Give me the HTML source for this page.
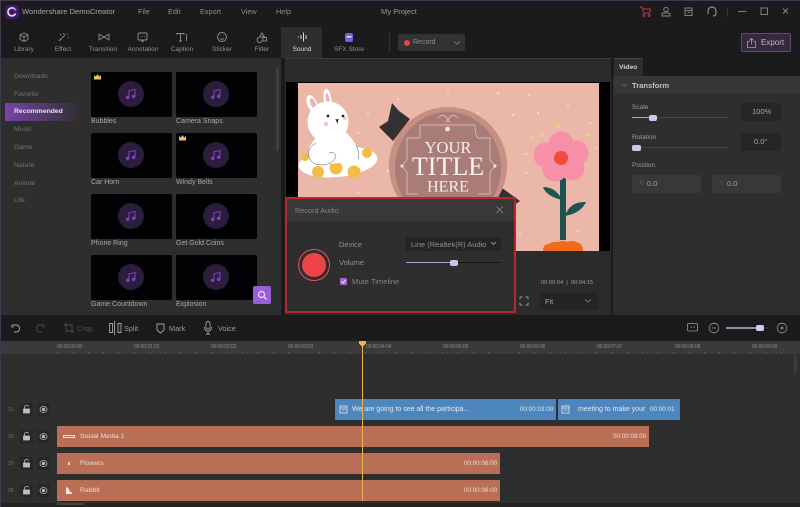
<!DOCTYPE html>
<html><head><meta charset="utf-8">
<style>
html,body{margin:0;padding:0;background:#1b1a1d}
#r{position:relative;width:800px;height:507px;overflow:hidden;background:#1b1a1d;font-family:"Liberation Sans",sans-serif;color:#a9a9a9;font-size:7px;filter:blur(.3px)}
#r div,#r span.a,#r svg{position:absolute}
.t{position:absolute;white-space:nowrap;line-height:10px}
.tab{top:45px;width:50px;text-align:center;font-size:6.5px;color:#8f8f8f}
.ic{stroke:#8f8f8f;fill:none;stroke-width:.9}
.th{width:81px;height:45px;background:#020103;border-radius:2px}
.disc{left:27px;top:9px;width:26px;height:26px;border-radius:50%;background:#2a1e3c}
.lb{font-size:7px;color:#a8a8a8}
.cat{left:14px;font-size:6.8px;color:#747474}
.clip{height:21px;background:#b96f56;left:57px}
.blue{background:#4d86bc}
.rt{top:342px;font-size:5px;color:#8c8c8c;letter-spacing:-.1px}
.num{left:8px;font-size:5px;color:#6f6f6f}
.bx{width:13px;height:13px;background:#272727;border-radius:2px}
.ct{color:#eadcd6;font-size:6.8px}
</style></head><body>
<div id="r">
<div style="left:0;top:0;width:800px;height:1px;background:#3c3a4c"></div>
<div style="left:0;top:0;width:1px;height:507px;background:#3c3a4c"></div>

<!-- title bar -->
<svg style="left:5px;top:5px" width="14" height="14" viewBox="0 0 14 14"><rect width="14" height="14" rx="3" fill="#3b1a66"/><path d="M9.5 3.8A4 4 0 1 0 10.6 8.5" stroke="#e8dcff" stroke-width="1.6" fill="none"/><circle cx="10" cy="4.5" r="1.3" fill="#d05ad8"/></svg>
<span class="t" style="left:22px;top:7px;font-size:7.6px;color:#a5a5a5">Wondershare DemoCreator</span>
<span class="t" style="left:138px;top:7px;font-size:7.3px;color:#8d8d8d">File</span>
<span class="t" style="left:168px;top:7px;font-size:7.3px;color:#8d8d8d">Edit</span>
<span class="t" style="left:200px;top:7px;font-size:7.3px;color:#8d8d8d">Export</span>
<span class="t" style="left:241px;top:7px;font-size:7.3px;color:#8d8d8d">View</span>
<span class="t" style="left:276px;top:7px;font-size:7.3px;color:#8d8d8d">Help</span>
<span class="t" style="left:381px;top:7px;font-size:7.6px;color:#9a9a9a">My Project</span>
<svg style="left:638px;top:5px" width="150" height="14" viewBox="0 0 150 14" fill="none" stroke="#8e8e8e" stroke-width=".9">
<path d="M2 2h2l1.5 6h6l1-4H4.5" stroke="#b8453f"/><circle cx="6" cy="10.5" r=".9" stroke="#b8453f"/><circle cx="11" cy="10.5" r=".9" stroke="#b8453f"/>
<circle cx="28" cy="4.5" r="2.2"/><path d="M24 11v-1.5q0-1.5 1.5-1.5h5q1.500 0 1.500 1.500V11z"/>
<rect x="47" y="3" width="7" height="7.5"/><path d="M47 5.5h7"/><path d="M49.5 7.500h2.500"/>
<path d="M70 9V6a4 4 0 1 1 8 0v2q0 3-3 3" stroke-width="1.2"/>
<path d="M89.500 2v10" stroke="#3e3e3e"/>
<path d="M100 6.500h8.500"/><rect x="123" y="3" width="6.500" height="6.500"/><path d="M145 3.500l5 5m0-5l-5 5"/>
</svg>

<!-- toolbar tabs -->
<div style="left:281px;top:27px;width:41px;height:31px;background:#2e2e30;border-radius:2px 2px 0 0"></div>
<svg style="left:0;top:30px" width="360" height="14" viewBox="0 0 360 14">
<g class="ic"><path d="M20 5l4-2 4 2v4.500l-4 2-4-2zM20 5l4 2 4-2M24 7v4.500"/>
<path d="M59 11l6-6M63.500 3l.8 1.500M67 3.500l.5 1M68 7l1 .5M60 4l1 1"/>
<path d="M99 4v6l5-3zM109 4v6l-5-3z"/>
<rect x="138" y="3" width="9" height="7" rx="1"/><path d="M141 10l1.500 2 1.500-2M140.500 6.500h.5M142.500 6.500h.5M144.500 6.500h.5"/>
<path d="M177 5V3.500h7V5M180.500 3.500V11M179 11h3M186.500 4v7"/>
<circle cx="222" cy="7" r="4.500"/><path d="M220 8.500q2 1.500 4 0"/><path d="M220.200 5.500v.5M223.800 5.500v.5"/>
<path d="M262 3l2.500 4h-5zM259 7.500a2.500 2.500 0 1 0 3 3M263 7.500h3.500v3.500H263z"/></g>
<path d="M301 5v4M303.500 2.500v9M306 5v4" stroke="#d8d8d8" fill="none" stroke-width="1"/><path d="M298.500 6.500v1" stroke="#d8d8d8"/>
<rect x="345" y="3" width="8" height="9" rx="2" fill="#7d5bd6"/><rect x="346.500" y="6" width="5" height="1.500" fill="#e6dcff"/>
</svg>
<span class="t tab" style="left:-1px">Library</span>
<span class="t tab" style="left:38px">Effect</span>
<span class="t tab" style="left:78px">Transition</span>
<span class="t tab" style="left:118px">Annotation</span>
<span class="t tab" style="left:157px">Caption</span>
<span class="t tab" style="left:197px">Sticker</span>
<span class="t tab" style="left:237px">Filter</span>
<span class="t tab" style="left:277px;color:#dcdcdc">Sound</span>
<span class="t tab" style="left:324px">SFX Store</span>
<div style="left:389px;top:32px;width:1px;height:20px;background:#323232"></div>
<div style="left:398px;top:34px;width:67px;height:17px;background:#323232;border-radius:2px"></div>
<div style="left:404px;top:40px;width:6px;height:6px;border-radius:50%;background:#e8433f"></div>
<span class="t" style="left:413px;top:38px;font-size:7px;color:#8d8d8d">Record</span>
<svg style="left:453px;top:40px" width="8" height="6"><path d="M1 1.500l3 2.500 3-2.500" stroke="#777" fill="none"/></svg>
<div style="left:741px;top:33px;width:50px;height:19px;background:#35283f;border:1px solid #5e4a78;border-radius:2px;box-sizing:border-box"></div>
<svg style="left:746px;top:37px" width="12" height="12" fill="none" stroke="#a8a0b0" stroke-width=".8"><path d="M3.500 4.500H1.500v6h8v-6h-2M5.500 7.500V1.500M3.500 3.500l2-2 2 2"/></svg>
<span class="t" style="left:761px;top:38px;font-size:8px;color:#bdb5c4">Export</span>

<!-- left panel -->
<div style="left:1px;top:58px;width:280px;height:257px;background:#2e2e2f"></div>
<div style="left:5px;top:103px;width:76px;height:18px;background:linear-gradient(90deg,#7844a8,#2f2e30)"></div>
<span class="t cat" style="top:72px">Downloads</span>
<span class="t cat" style="top:90px">Favorite</span>
<span class="t cat" style="top:107px;color:#e6dff0;font-weight:bold">Recommended</span>
<span class="t cat" style="top:125px">Music</span>
<span class="t cat" style="top:143px">Game</span>
<span class="t cat" style="top:161px">Nature</span>
<span class="t cat" style="top:179px">Animal</span>
<span class="t cat" style="top:196px">Life</span>
<div style="left:276px;top:67px;width:3px;height:84px;background:#3f3f40;border-radius:2px"></div>

<div class="th" style="left:91px;top:72px"><div class="disc"></div><svg style="left:34px;top:16px" width="12" height="12" viewBox="0 0 12 12" fill="none" stroke="#7f3eb6" stroke-width="1.100"><path d="M4 9V2.800L10 1.500V8"/><circle cx="2.700" cy="9.300" r="1.300" fill="#7f3eb6"/><circle cx="8.700" cy="8.300" r="1.300" fill="#7f3eb6"/></svg></div>
<div class="th" style="left:176px;top:72px"><div class="disc"></div><svg style="left:34px;top:16px" width="12" height="12" viewBox="0 0 12 12" fill="none" stroke="#7f3eb6" stroke-width="1.100"><path d="M4 9V2.800L10 1.500V8"/><circle cx="2.700" cy="9.300" r="1.300" fill="#7f3eb6"/><circle cx="8.700" cy="8.300" r="1.300" fill="#7f3eb6"/></svg></div>
<div class="th" style="left:91px;top:133px"><div class="disc"></div><svg style="left:34px;top:16px" width="12" height="12" viewBox="0 0 12 12" fill="none" stroke="#7f3eb6" stroke-width="1.100"><path d="M4 9V2.800L10 1.500V8"/><circle cx="2.700" cy="9.300" r="1.300" fill="#7f3eb6"/><circle cx="8.700" cy="8.300" r="1.300" fill="#7f3eb6"/></svg></div>
<div class="th" style="left:176px;top:133px"><div class="disc"></div><svg style="left:34px;top:16px" width="12" height="12" viewBox="0 0 12 12" fill="none" stroke="#7f3eb6" stroke-width="1.100"><path d="M4 9V2.800L10 1.500V8"/><circle cx="2.700" cy="9.300" r="1.300" fill="#7f3eb6"/><circle cx="8.700" cy="8.300" r="1.300" fill="#7f3eb6"/></svg></div>
<div class="th" style="left:91px;top:194px"><div class="disc"></div><svg style="left:34px;top:16px" width="12" height="12" viewBox="0 0 12 12" fill="none" stroke="#7f3eb6" stroke-width="1.100"><path d="M4 9V2.800L10 1.500V8"/><circle cx="2.700" cy="9.300" r="1.300" fill="#7f3eb6"/><circle cx="8.700" cy="8.300" r="1.300" fill="#7f3eb6"/></svg></div>
<div class="th" style="left:176px;top:194px"><div class="disc"></div><svg style="left:34px;top:16px" width="12" height="12" viewBox="0 0 12 12" fill="none" stroke="#7f3eb6" stroke-width="1.100"><path d="M4 9V2.800L10 1.500V8"/><circle cx="2.700" cy="9.300" r="1.300" fill="#7f3eb6"/><circle cx="8.700" cy="8.300" r="1.300" fill="#7f3eb6"/></svg></div>
<div class="th" style="left:91px;top:255px"><div class="disc"></div><svg style="left:34px;top:16px" width="12" height="12" viewBox="0 0 12 12" fill="none" stroke="#7f3eb6" stroke-width="1.100"><path d="M4 9V2.800L10 1.500V8"/><circle cx="2.700" cy="9.300" r="1.300" fill="#7f3eb6"/><circle cx="8.700" cy="8.300" r="1.300" fill="#7f3eb6"/></svg></div>
<div class="th" style="left:176px;top:255px"><div class="disc"></div><svg style="left:34px;top:16px" width="12" height="12" viewBox="0 0 12 12" fill="none" stroke="#7f3eb6" stroke-width="1.100"><path d="M4 9V2.800L10 1.500V8"/><circle cx="2.700" cy="9.300" r="1.300" fill="#7f3eb6"/><circle cx="8.700" cy="8.300" r="1.300" fill="#7f3eb6"/></svg></div>
<svg style="left:93px;top:73px" width="9" height="8"><path d="M1 2l1.800 1.500L4.500 1l1.700 2.500L8 2v4.500H1z" fill="#e8bd68"/></svg>
<svg style="left:178px;top:134px" width="9" height="8"><path d="M1 2l1.800 1.500L4.500 1l1.700 2.500L8 2v4.500H1z" fill="#e8bd68"/></svg>
<span class="t lb" style="left:91px;top:117px">Bubbles</span>
<span class="t lb" style="left:176px;top:117px">Camera Snaps</span>
<span class="t lb" style="left:91px;top:178px">Car Horn</span>
<span class="t lb" style="left:176px;top:178px">Windy Bells</span>
<span class="t lb" style="left:91px;top:239px">Phone Ring</span>
<span class="t lb" style="left:176px;top:239px">Get Gold Coins</span>
<span class="t lb" style="left:91px;top:300px">Game Countdown</span>
<span class="t lb" style="left:176px;top:300px">Explosion</span>
<div style="left:253px;top:286px;width:18px;height:18px;background:#9a5fd6;border-radius:2px"></div>
<svg style="left:256px;top:289px" width="12" height="12" fill="none" stroke="#efe6fa" stroke-width="1.200"><circle cx="5.500" cy="5.500" r="3"/><path d="M8 8l2.500 2.500"/></svg>

<!-- preview -->
<div style="left:285px;top:58px;width:326px;height:257px;background:#2b2b2c"></div>
<div style="left:285px;top:58px;width:326px;height:1px;background:#3d3d3e"></div>
<div style="left:286px;top:82px;width:324px;height:169px;background:#010101"></div>
<svg style="left:298px;top:83px" width="301" height="168" viewBox="0 0 301 168">
<rect width="301" height="168" fill="#ebb7a9"/>
<g fill="#f6d9cf"><circle cx="30" cy="8" r="1"/><circle cx="70" cy="30" r="1"/><circle cx="100" cy="16" r="1.200"/><circle cx="150" cy="8" r="1"/><circle cx="200" cy="10" r="1.200"/><circle cx="215" cy="32" r="1.200"/><circle cx="240" cy="30" r="1.300"/><circle cx="270" cy="22" r="1"/><circle cx="231" cy="12" r="1"/><circle cx="292" cy="40" r="1"/><circle cx="20" cy="130" r="1.200"/><circle cx="60" cy="110" r="1"/><circle cx="90" cy="88" r="1.200"/><circle cx="75" cy="150" r="1"/><circle cx="240" cy="125" r="1"/><circle cx="280" cy="148" r="1"/><circle cx="228" cy="90" r="1"/><circle cx="222" cy="150" r="1"/><circle cx="180" cy="30" r="1"/><circle cx="60" cy="50" r="1"/></g>
<!-- float -->
<ellipse cx="40" cy="79" rx="39.500" ry="15" fill="#fff" transform="rotate(-6 40 79)"/>
<circle cx="38" cy="85" r="6.500" fill="#f4bb46"/><circle cx="20" cy="89" r="6" fill="#f4bb46"/><circle cx="56" cy="89" r="6.500" fill="#f4bb46"/><circle cx="7" cy="74" r="4" fill="#f4bb46"/><circle cx="69" cy="70" r="5" fill="#f4bb46"/>
<!-- rabbit -->
<path d="M13 28q-6-7-4-14 2-4 6 0 4 4 7 13zM28 24q-4-9-2-16 2-4 5 0 3 6 3 15z" fill="#fff"/>
<path d="M15 25q-4-5-3-9 1-2 3 0 3 3 4 8zM29 21q-2-6-1-10 1-2 2 0 2 5 2 10z" fill="#f2afb4"/>
<path d="M18 55Q8 65 11 74Q13 82 24 82L58 78Q63 72 58 62Q52 52 46 48Z" fill="#fff"/>
<circle cx="30" cy="39" r="20.500" fill="#fff"/>
<path d="M18 60Q8 66 11 74Q13 82 24 82Q34 82 38 74Q37 68 31 70M58 62Q62 70 60 76" fill="none" stroke="#55524f" stroke-width=".5"/>
<circle cx="30" cy="33" r="1.400" fill="#222"/><circle cx="45" cy="33" r="1.400" fill="#222"/><path d="M37.500 36.500h3l-1 1.500v2.500" fill="#222" stroke="#222" stroke-width=".6"/>
<circle cx="28" cy="41" r="2.300" fill="#f6c7cb"/><circle cx="47" cy="35.500" r="1.800" fill="#f6c7cb"/>
<!-- bows -->
<path d="M94 20L101 28L112 36L95 58L81 44L90 38Z" fill="#323030"/>
<path d="M204 105L222 118L212 125L196 125Z" fill="#323030"/>
<!-- badge -->
<circle cx="150" cy="83" r="59" fill="#c78e84"/>
<ellipse cx="150" cy="85" rx="53" ry="56" fill="#a97c78"/>
<path d="M122 55V42H177Q177 52 180 55H192V77L197 83L192 89V111H180M122 55H109V77L104 83L109 89V111H120" fill="none" stroke="#e4cbc3" stroke-width=".7"/>
<path d="M140 35q5-5 9 0 2 4-2 4M160 35q-5-5-9 0-2 4 2 4" fill="none" stroke="#e4cbc3" stroke-width=".7"/>
<circle cx="149.500" cy="46" r="2.400" fill="#f2e4df"/>
<text x="150" y="70" text-anchor="middle" font-family="Liberation Serif,serif" font-size="16.500" fill="#f8efe9">YOUR</text>
<text x="150" y="92" text-anchor="middle" font-family="Liberation Serif,serif" font-size="26" fill="#fbf3ee">TITLE</text>
<text x="150" y="108.600" text-anchor="middle" font-family="Liberation Serif,serif" font-size="16" fill="#f8efe9">HERE</text>
<circle cx="104" cy="83" r="1.500" fill="#f6ece7"/><circle cx="197" cy="83" r="1.500" fill="#f6ece7"/>
<!-- flower -->
<path d="M265 157V92" stroke="#1d5350" stroke-width="6" fill="none"/>
<path d="M264 117Q258 104 245 104Q248 113 264 117ZM267 133Q283 130 288 119Q272 118 267 133Z" fill="#1d5350"/>
<g fill="#f78fa9"><circle cx="263" cy="61" r="12.500"/><circle cx="278" cy="70" r="12.500"/><circle cx="274" cy="85" r="12.500"/><circle cx="257" cy="86" r="12.500"/><circle cx="248" cy="72" r="12.500"/><circle cx="263" cy="75" r="12"/></g>
<circle cx="263" cy="75" r="7" fill="#ee4c3e"/>
<g stroke="#f2d676" stroke-width="1.500" fill="none"><path d="M260 45l.8-5M243 49l3 4.500M287 53l4-1.500M232 54l3 2M226 71h4M296 65h3"/></g>
<path d="M245 168q0-7 6-7 4-3 9-2 5-2 9 0 5-2 9 0 7 1 7 9z" fill="#f06b1a"/>
</svg>

<!-- preview controls -->
<span class="t" style="left:541px;top:278px;font-size:5.700px;color:#9f9f9f">00:00:04 &nbsp;|&nbsp; 00:04:15</span>
<svg style="left:519px;top:296px" width="10" height="10" fill="none" stroke="#9a9a9a" stroke-width=".9"><path d="M1 3.500V1h2.500M6.500 1H9v2.500M9 6.500V9H6.500M3.500 9H1V6.500"/></svg>
<div style="left:540px;top:293px;width:58px;height:17px;background:#242424;border-radius:2px"></div>
<span class="t" style="left:545px;top:297px;font-size:7.300px;color:#a8a8a8">Fit</span>
<svg style="left:584px;top:298px" width="8" height="6"><path d="M1 1.500l3 2.500 3-2.500" stroke="#777" fill="none"/></svg>

<!-- dialog -->
<div style="left:285px;top:197px;width:231px;height:116px;box-sizing:border-box;border:2px solid #b82730;background:#2e2e2e"></div>
<div style="left:287px;top:199px;width:227px;height:22px;background:#383838"></div>
<span class="t" style="left:295px;top:206px;font-size:7.300px;color:#858585">Record Audio</span>
<svg style="left:495px;top:205px" width="10" height="10" stroke="#8a8a8a" stroke-width=".8"><path d="M1.500 1.500l6.500 6.500M8 1.500L1.500 8"/></svg>
<svg style="left:297px;top:248px" width="34" height="34"><circle cx="17" cy="17" r="15.500" fill="none" stroke="#e8504f" stroke-width="1"/><circle cx="17" cy="17" r="12" fill="#ee4347"/></svg>
<span class="t" style="left:339px;top:240px;font-size:7.500px;color:#929292">Device</span>
<span class="t" style="left:339px;top:258px;font-size:7.500px;color:#929292">Volume</span>
<div style="left:406px;top:237px;width:95px;height:14px;background:#242424;border-radius:2px"></div>
<span class="t" style="left:411px;top:240px;font-size:7.500px;color:#8f8f8f">Line (Realtek(R) Audio</span>
<svg style="left:490px;top:241px" width="7" height="5"><path d="M1 1l2.500 2.500L6 1" stroke="#8f8f8f" fill="none"/></svg>
<div style="left:406px;top:262px;width:95px;height:1px;background:#141414"></div>
<div style="left:406px;top:262px;width:47px;height:1px;background:#a8a3d6"></div>
<div style="left:450px;top:260px;width:8px;height:6px;border-radius:2px;background:#c7c4ee"></div>
<div style="left:340px;top:278px;width:7px;height:7px;border-radius:1px;background:#a066d0"></div>
<svg style="left:340px;top:278px" width="7" height="7"><path d="M1.500 3.500l1.500 1.500 2.500-3" stroke="#f0e8f8" fill="none"/></svg>
<span class="t" style="left:352px;top:277px;font-size:7.600px;color:#858585">Mute Timeline</span>

<!-- right panel -->
<div style="left:613px;top:58px;width:187px;height:257px;background:#2e2e2f"></div>
<div style="left:613px;top:58px;width:187px;height:18px;background:#1b1a1d"></div>
<div style="left:614px;top:58px;width:29px;height:18px;background:#2e2e30;border-top:1px solid #444;box-sizing:border-box"></div>
<span class="t" style="left:619px;top:63px;font-size:6.800px;font-weight:bold;color:#cfcfcf">Video</span>
<div style="left:614px;top:76px;width:186px;height:18px;background:#373737"></div>
<svg style="left:622px;top:82px" width="7" height="5"><path d="M.500 2.500l2 1.500 2-1.500" stroke="#666" fill="none"/></svg>
<span class="t" style="left:632px;top:81px;font-size:7.600px;font-weight:bold;color:#c2c2c2">Transform</span>
<span class="t" style="left:632px;top:103px;font-size:6.500px;color:#9b9b9b">Scale</span>
<div style="left:632px;top:117px;width:96px;height:1px;background:#454545"></div>
<div style="left:632px;top:117px;width:21px;height:1px;background:#a9a5d6"></div>
<div style="left:649px;top:115px;width:8px;height:6px;border-radius:2px;background:#cac7f0"></div>
<div style="left:741px;top:103px;width:40px;height:18px;background:#262626;border-radius:2px"></div>
<span class="t" style="left:752px;top:107px;font-size:7.500px;color:#a6a6a6">100%</span>
<span class="t" style="left:632px;top:133px;font-size:6.500px;color:#9b9b9b">Rotation</span>
<div style="left:632px;top:147px;width:96px;height:1px;background:#454545"></div>
<div style="left:632px;top:145px;width:9px;height:6px;border-radius:2px;background:#cac7f0"></div>
<div style="left:741px;top:133px;width:40px;height:18px;background:#262626;border-radius:2px"></div>
<span class="t" style="left:754px;top:137px;font-size:7.500px;color:#a6a6a6">0.0°</span>
<span class="t" style="left:632px;top:161px;font-size:6.500px;color:#9b9b9b">Position</span>
<div style="left:632px;top:175px;width:69px;height:18px;background:#383838"></div>
<div style="left:712px;top:175px;width:69px;height:18px;background:#383838"></div>
<span class="t" style="left:639px;top:179px;font-size:7px;color:#565656">X</span>
<span class="t" style="left:647px;top:179px;font-size:7.500px;color:#a0a0a0">0.0</span>
<span class="t" style="left:719px;top:179px;font-size:7px;color:#565656">Y</span>
<span class="t" style="left:727px;top:179px;font-size:7.500px;color:#a0a0a0">0.0</span>

<!-- timeline toolbar -->
<svg style="left:10px;top:320px" width="240" height="16" fill="none" stroke="#a5a5a5" stroke-width=".9">
<path d="M3 4.500l-1.500 2 2 1M2 5h4q3.500 0 3.500 3.500T6 12H4"/>
<path d="M33 4.500l1.500 2-2 1M34 5h-4q-3.500 0-3.500 3.500T30 12h2" stroke="#4a4a4a"/>
<path d="M56 3v8h8M54 5h8v8" stroke="#4f4f4f"/>
<path d="M101 3.500h-1.500v9h3v-9zM104.500 1v14"/><path d="M108 3.500h3v9h-3z"/>
<path d="M147 4h7v6l-3.500 3-3.500-3z"/>
<rect x="196" y="1.500" width="4" height="7.500" rx="2"/><path d="M194.500 7q0 4 3.500 4t3.500-4M198 11v3M196 14h4"/>
</svg>
<span class="t" style="left:77px;top:324px;font-size:7.300px;color:#4f4f4f">Crop</span>
<span class="t" style="left:124px;top:324px;font-size:7.300px;color:#9c9c9c">Split</span>
<span class="t" style="left:169px;top:324px;font-size:7.300px;color:#9c9c9c">Mark</span>
<span class="t" style="left:218px;top:324px;font-size:7.300px;color:#9c9c9c">Voice</span>
<svg style="left:685px;top:321px" width="106" height="14" fill="none" stroke="#9c9c9c" stroke-width=".8">
<rect x="2.500" y="2.500" width="10" height="7.500" rx="1"/><path d="M5.500 6.200h1.500M8.500 6.200h1.500"/>
<circle cx="29" cy="7" r="4.800"/><path d="M27 7h4"/>
<path d="M41 7h34" stroke="#d8d4ee" stroke-width="1.200"/><path d="M75 7h10" stroke="#444"/>
<circle cx="97" cy="7" r="4.800"/><path d="M95 7h4M97 5v4"/>
</svg>
<div style="left:756px;top:325px;width:8px;height:6px;background:#d0cdf2;border-radius:2px"></div>

<!-- timeline -->
<div style="left:1px;top:341px;width:799px;height:13px;background:#3a3a3a"></div>
<div style="left:1px;top:354px;width:799px;height:149px;background:#2e2e2e"></div>
<div style="left:1px;top:503px;width:799px;height:4px;background:#232323"></div>
<div style="left:57px;top:503px;width:27px;height:2px;background:#444"></div>
<div style="left:794px;top:355px;width:3px;height:18px;background:#3c3c3c"></div>
<span class="t rt" style="left:57px">00:00:00:00</span>
<span class="t rt" style="left:134px">00:00:01:01</span>
<span class="t rt" style="left:211px">00:00:02:02</span>
<span class="t rt" style="left:288px">00:00:03:03</span>
<span class="t rt" style="left:366px">00:00:04:04</span>
<span class="t rt" style="left:443px">00:00:05:05</span>
<span class="t rt" style="left:520px">00:00:06:06</span>
<span class="t rt" style="left:597px">00:00:07:07</span>
<span class="t rt" style="left:675px">00:00:08:08</span>
<span class="t rt" style="left:752px">00:00:09:09</span>
<div style="left:57px;top:352px;width:735px;height:1px;background:repeating-linear-gradient(90deg,#6a6a6a 0 1px,transparent 1px 15.400px)"></div>

<span class="t num" style="top:405px">31</span><span class="t num" style="top:432px">30</span><span class="t num" style="top:459px">29</span><span class="t num" style="top:486px">28</span>
<div class="bx" style="left:20px;top:403px"></div><div class="bx" style="left:37px;top:403px"></div>
<div class="bx" style="left:20px;top:430px"></div><div class="bx" style="left:37px;top:430px"></div>
<div class="bx" style="left:20px;top:457px"></div><div class="bx" style="left:37px;top:457px"></div>
<div class="bx" style="left:20px;top:484px"></div><div class="bx" style="left:37px;top:484px"></div>
<svg style="left:20px;top:403px" width="30" height="94" fill="none" stroke="#bdbdbd" stroke-width=".8">
<g><rect x="3.500" y="6" width="6" height="4" fill="#bdbdbd"/><path d="M4.500 6V4.500q0-2 2-2t2 1"/><ellipse cx="23.500" cy="6.500" rx="3.500" ry="3"/><circle cx="23.500" cy="6.500" r="1.200" fill="#bdbdbd"/></g>
<g transform="translate(0 27)"><rect x="3.500" y="6" width="6" height="4" fill="#bdbdbd"/><path d="M4.500 6V4.500q0-2 2-2t2 1"/><ellipse cx="23.500" cy="6.500" rx="3.500" ry="3"/><circle cx="23.500" cy="6.500" r="1.200" fill="#bdbdbd"/></g>
<g transform="translate(0 54)"><rect x="3.500" y="6" width="6" height="4" fill="#bdbdbd"/><path d="M4.500 6V4.500q0-2 2-2t2 1"/><ellipse cx="23.500" cy="6.500" rx="3.500" ry="3"/><circle cx="23.500" cy="6.500" r="1.200" fill="#bdbdbd"/></g>
<g transform="translate(0 81)"><rect x="3.500" y="6" width="6" height="4" fill="#bdbdbd"/><path d="M4.500 6V4.500q0-2 2-2t2 1"/><ellipse cx="23.500" cy="6.500" rx="3.500" ry="3"/><circle cx="23.500" cy="6.500" r="1.200" fill="#bdbdbd"/></g>
</svg>

<div class="clip blue" style="left:335px;top:399px;width:221px"></div>
<div class="clip blue" style="left:558px;top:399px;width:122px"></div>
<div class="clip" style="top:426px;width:592px"></div>
<div class="clip" style="top:453px;width:443px"></div>
<div class="clip" style="top:480px;width:443px"></div>

<svg style="left:339px;top:405px" width="10" height="10" fill="none" stroke="#dcebf8" stroke-width=".8"><rect x="1" y="1" width="7" height="7"/><path d="M1 3h7M3 5h3"/></svg>
<svg style="left:561px;top:405px" width="10" height="10" fill="none" stroke="#dcebf8" stroke-width=".8"><rect x="1" y="1" width="7" height="7"/><path d="M1 3h7M3 5h3"/></svg>
<span class="t" style="left:352px;top:405px;font-size:7px;color:#dfeaf3">We are going to see all the participa...</span>
<span class="t" style="left:520px;top:405px;font-size:6.300px;color:#dfeaf3">00:00:03:00</span>
<span class="t" style="left:578px;top:405px;font-size:7px;color:#dfeaf3">meeting to make your</span>
<span class="t" style="left:650px;top:405px;font-size:6.300px;color:#dfeaf3">00:00:01:</span>

<div style="left:63px;top:435px;width:10px;height:1px;border:1px solid #f2e2da;background:#b96f56;box-sizing:content-box"></div>
<span class="t ct" style="left:80px;top:432px">Social Media 1</span>
<span class="t ct" style="left:613px;top:432px;font-size:6.300px">00:00:08:00</span>
<div style="left:68px;top:462px;width:2px;height:3px;background:#e8cfc0"></div>
<span class="t ct" style="left:80px;top:459px">Flowers</span>
<span class="t ct" style="left:464px;top:459px;font-size:6.300px">00:00:06:00</span>
<svg style="left:64px;top:486px" width="10" height="10"><path d="M2 8V1.500h2l1.500 3.500L8 7v1z" fill="#f6e8e0"/></svg>
<span class="t ct" style="left:80px;top:486px">Rabbit</span>
<span class="t ct" style="left:464px;top:486px;font-size:6.300px">00:00:06:00</span>

<div style="left:362px;top:344px;width:1px;height:157px;background:#edb24a"></div>
<svg style="left:359px;top:341px" width="7" height="6"><path d="M0 0h7v2.500L3.500 6 0 2.500z" fill="#f0b64e"/></svg>
</div>
</body></html>
